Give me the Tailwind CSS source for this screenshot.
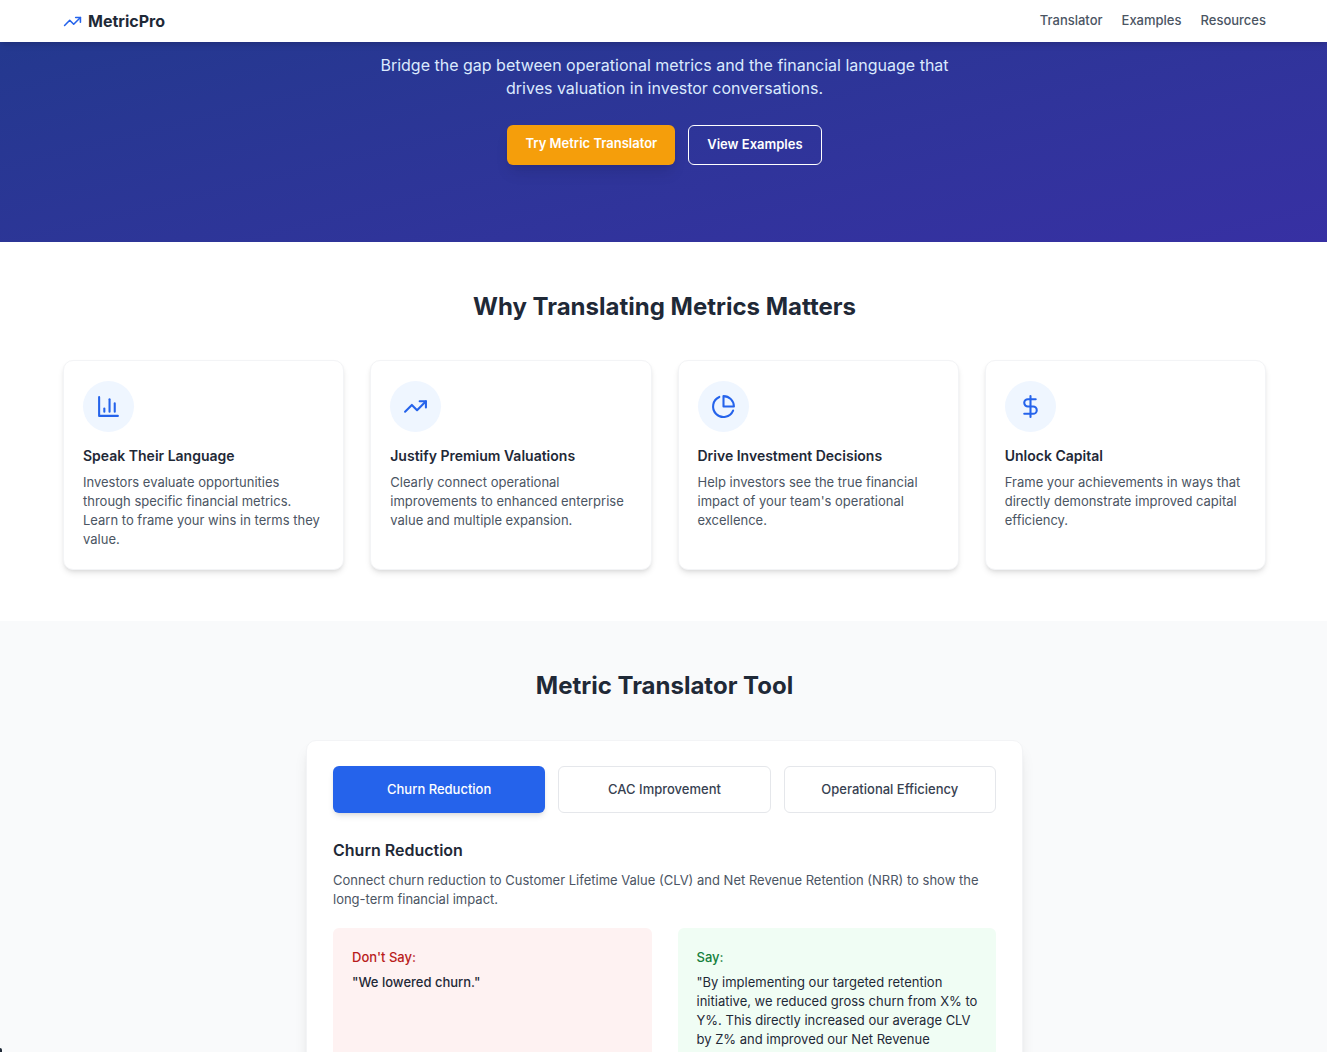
<!DOCTYPE html>
<html lang="en">
<head>
    <meta charset="UTF-8">
    <meta name="viewport" content="width=device-width, initial-scale=1.0">
    <title>MetricPro</title>
    <script src="https://cdn.jsdelivr.net/npm/@tailwindcss/browser@4"></script>
</head>
<body class="bg-white font-['Inter',sans-serif] text-[13px] leading-[19px] text-[#1f2937]">
    <!-- Navigation -->
    <header class="sticky top-0 z-10 bg-white shadow-md pl-[63px] pr-[61px]">
        <div class="flex h-[42px] items-center justify-between">
            <a href="#" class="flex items-center gap-[6px] text-[16px] font-bold">
                <svg class="size-[19px] text-[#2563eb]" viewBox="0 0 24 24" fill="none" stroke="currentColor" stroke-width="2" stroke-linecap="round" stroke-linejoin="round">
                    <polyline points="22 7 13.5 15.5 8.5 10.5 2 17" />
                    <polyline points="16 7 22 7 22 13" />
                </svg>
                MetricPro
            </a>
            <nav class="flex gap-[19px] pb-0.5 font-medium text-[#4b5563]">
                <a href="#translator">Translator</a>
                <a href="#examples">Examples</a>
                <a href="#resources">Resources</a>
            </nav>
        </div>
    </header>

    <!-- Hero -->
    <section class="-mt-[124px] bg-linear-to-br from-[#1e3a8a] to-[#3730a3] pl-[63px] pr-[61px] pt-[136px] pb-[77px] text-center">
        <p class="mx-auto max-w-[614px] text-[16px] leading-[23px] text-[#dbeafe]">
            Bridge the gap between operational metrics and the financial language that drives valuation in investor conversations.
        </p>
        <div class="mt-[25px] flex justify-center gap-[13px] font-semibold leading-[18px] text-white">
            <a href="#translator" class="rounded-md bg-[#f59e0b] px-[18px] pt-[9px] pb-[11px] shadow-lg">Try Metric Translator</a>
            <a href="#examples" class="rounded-md border border-white px-[18px] pt-[9px] pb-[11px]">View Examples</a>
        </div>
    </section>

    <!-- Why it matters -->
    <section class="bg-white pl-[63px] pr-[61px] py-[51px]">
        <h2 class="text-center text-[24px] font-bold leading-[28px]">Why Translating Metrics Matters</h2>
        <div class="mt-[39px] grid grid-cols-4 gap-[26px]">
            <div class="rounded-[10px] border border-[#f3f4f6] bg-white px-[19px] py-5 shadow-md">
                <div class="flex size-[51px] items-center justify-center rounded-full bg-[#eff6ff]">
                    <svg class="size-[25px] text-[#2563eb]" viewBox="0 0 24 24" fill="none" stroke="currentColor" stroke-width="2" stroke-linecap="round" stroke-linejoin="round">
                        <path d="M3 3v18h18" />
                        <path d="M18 17V9" />
                        <path d="M13 17V5" />
                        <path d="M8 17v-3" />
                    </svg>
                </div>
                <h3 class="mt-[13px] text-[14px] font-semibold leading-[22px]">Speak Their Language</h3>
                <p class="mt-[6px] text-[#4b5563]">Investors evaluate opportunities through specific financial metrics. Learn to frame your wins in terms they value.</p>
            </div>
            <div class="rounded-[10px] border border-[#f3f4f6] bg-white px-[19px] py-5 shadow-md">
                <div class="flex size-[51px] items-center justify-center rounded-full bg-[#eff6ff]">
                    <svg class="size-[25px] text-[#2563eb]" viewBox="0 0 24 24" fill="none" stroke="currentColor" stroke-width="2" stroke-linecap="round" stroke-linejoin="round">
                        <polyline points="22 7 13.5 15.5 8.5 10.5 2 17" />
                        <polyline points="16 7 22 7 22 13" />
                    </svg>
                </div>
                <h3 class="mt-[13px] text-[14px] font-semibold leading-[22px]">Justify Premium Valuations</h3>
                <p class="mt-[6px] text-[#4b5563]">Clearly connect operational improvements to enhanced enterprise value and multiple expansion.</p>
            </div>
            <div class="rounded-[10px] border border-[#f3f4f6] bg-white px-[19px] py-5 shadow-md">
                <div class="flex size-[51px] items-center justify-center rounded-full bg-[#eff6ff]">
                    <svg class="size-[25px] text-[#2563eb]" viewBox="0 0 24 24" fill="none" stroke="currentColor" stroke-width="2" stroke-linecap="round" stroke-linejoin="round">
                        <path d="M21.21 15.89A10 10 0 1 1 8 2.83" />
                        <path d="M22 12A10 10 0 0 0 12 2v10z" />
                    </svg>
                </div>
                <h3 class="mt-[13px] text-[14px] font-semibold leading-[22px]">Drive Investment Decisions</h3>
                <p class="mt-[6px] text-[#4b5563]">Help investors see the true financial impact of your team's operational excellence.</p>
            </div>
            <div class="rounded-[10px] border border-[#f3f4f6] bg-white px-[19px] py-5 shadow-md">
                <div class="flex size-[51px] items-center justify-center rounded-full bg-[#eff6ff]">
                    <svg class="size-[25px] text-[#2563eb]" viewBox="0 0 24 24" fill="none" stroke="currentColor" stroke-width="2" stroke-linecap="round" stroke-linejoin="round">
                        <line x1="12" y1="2" x2="12" y2="22" />
                        <path d="M17 5H9.5a3.5 3.5 0 0 0 0 7h5a3.5 3.5 0 0 1 0 7H6" />
                    </svg>
                </div>
                <h3 class="mt-[13px] text-[14px] font-semibold leading-[22px]">Unlock Capital</h3>
                <p class="mt-[6px] text-[#4b5563]">Frame your achievements in ways that directly demonstrate improved capital efficiency.</p>
            </div>
        </div>
    </section>

    <!-- Translator tool -->
    <section id="translator" class="bg-[#f9fafb] pl-[63px] pr-[61px] py-[51px]">
        <h2 class="text-center text-[24px] font-bold leading-[28px]">Metric Translator Tool</h2>
        <div class="mx-auto mt-10 max-w-[717px] rounded-[10px] border border-[#f3f4f6] bg-white px-[26px] py-[25px] shadow-lg">
            <div class="grid grid-cols-3 gap-[13px] font-medium text-[#374151]">
                <button type="button" class="h-[47px] rounded-md bg-[#2563eb] text-white shadow-md">Churn Reduction</button>
                <button type="button" class="h-[47px] rounded-md border border-[#e5e7eb] bg-white">CAC Improvement</button>
                <button type="button" class="h-[47px] rounded-md border border-[#e5e7eb] bg-white">Operational Efficiency</button>
            </div>
            <h3 class="mt-[26px] text-[16px] font-semibold leading-[22px]">Churn Reduction</h3>
            <p class="mt-[10px] text-[#4b5563]">Connect churn reduction to Customer Lifetime Value (CLV) and Net Revenue Retention (NRR) to show the long-term financial impact.</p>
            <div class="mt-[19px] grid grid-cols-2 gap-[26px]">
                <div class="rounded-md bg-[#fef2f2] pl-[19px] pr-[14px] py-5">
                    <h4 class="font-medium text-[#b91c1c]">Don't Say:</h4>
                    <p class="mt-[6px] font-medium">"We lowered churn."</p>
                </div>
                <div class="rounded-md bg-[#f0fdf4] pl-[19px] pr-[14px] py-5">
                    <h4 class="font-medium text-[#15803d]">Say:</h4>
                    <p class="mt-[6px]">"By implementing our targeted retention initiative, we reduced gross churn from X% to Y%. This directly increased our average CLV by Z% and improved our Net Revenue</p>
                </div>
            </div>
        </div>
    </section>

    <div class="fixed bottom-0 left-0 h-1 w-0.5 rounded-tr-full bg-[#1f2937]"></div>
</body>
</html>
